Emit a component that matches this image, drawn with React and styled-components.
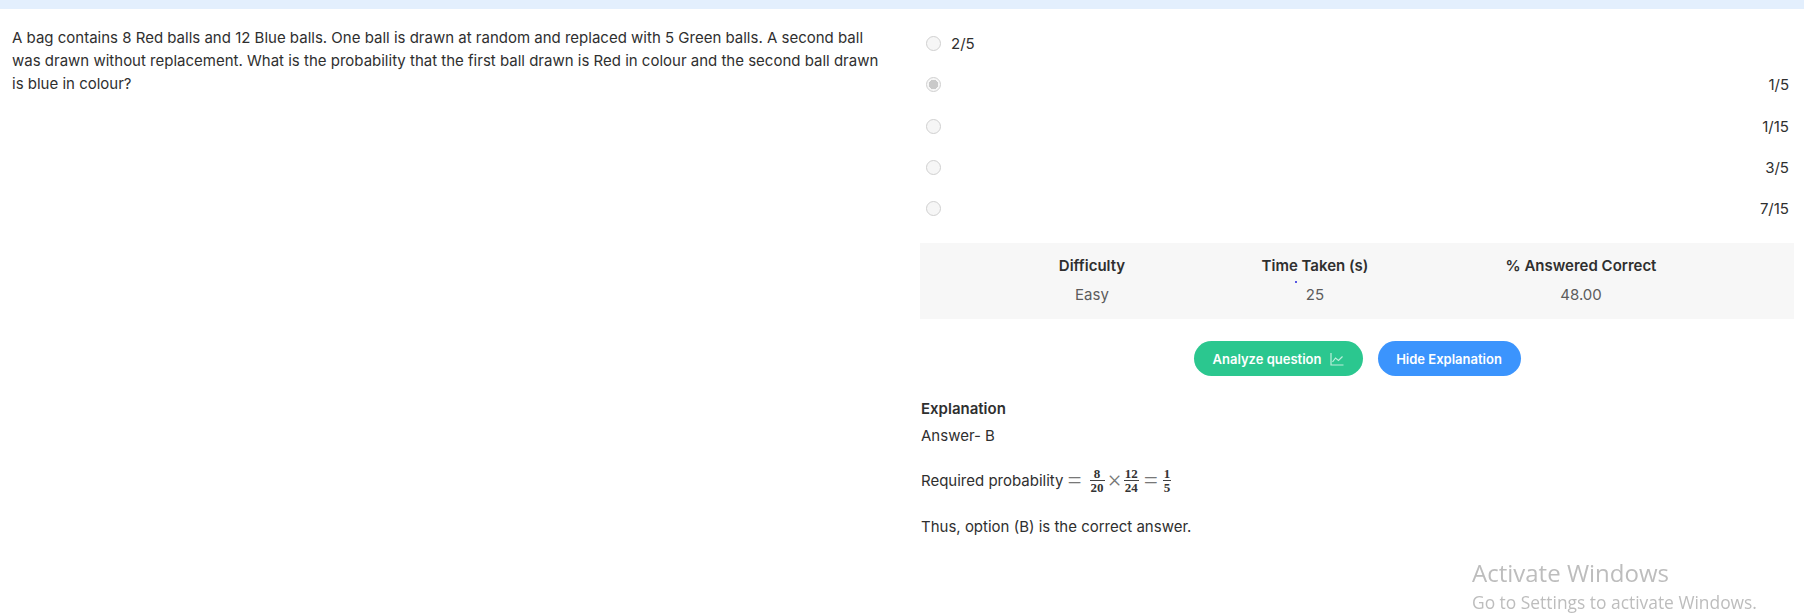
import React from "react";
import styled, { createGlobalStyle } from "styled-components";

const GlobalStyle = createGlobalStyle`
  html, body {
    margin: 0;
    padding: 0;
    background: #fff;
    height: 100%;
    overflow: hidden;
  }
  body {
    font-family: Inter, "Liberation Sans", sans-serif;
    font-size: 15px;
    color: #2f2f2f;
  }
`;

const TopBar = styled.div`
  height: 9px;
  background: #e3effd;
`;

const Main = styled.div`
  display: grid;
  grid-template-columns: 920px 874px;
  padding-top: 14px;
`;

const Question = styled.p`
  margin: 0;
  padding: 3px 30px 0 12px;
  line-height: 23px;
`;

const Side = styled.div`
  display: flex;
  flex-direction: column;
`;

const Options = styled.div`
  display: flex;
  flex-direction: column;
  margin-bottom: 14px;
`;

const OptionRow = styled.label`
  display: flex;
  align-items: center;
  height: 41.3px;
  padding: 0 5px 0 6px;
`;

const Radio = styled.input.attrs({ type: "radio", disabled: true })`
  appearance: none;
  flex: none;
  box-sizing: border-box;
  width: 15px;
  height: 15px;
  margin: 0;
  border: 1px solid #d0d0d0;
  border-radius: 50%;
  background: #f6f6f6;

  &:checked {
    background: radial-gradient(circle, #c9c9c9 0 4.5px, #f6f6f6 5px);
  }
`;

const OptionText = styled.span`
  flex: 1;
  margin-left: ${(p) => (p.$right ? "0" : "10px")};
  text-align: ${(p) => (p.$right ? "right" : "left")};
`;

const Stats = styled.div`
  position: relative;
  display: grid;
  grid-template-columns: 344px 102px 430px;
  justify-content: start;
  align-content: start;
  padding-top: 11px;
  height: 76px;
  box-sizing: border-box;
  background: #f7f7f7;
  text-align: center;
`;

const StatHead = styled.div`
  justify-self: center;
  font-weight: 600;
  line-height: 23px;
  white-space: nowrap;
`;

const StatValue = styled.div`
  margin-top: 7px;
  line-height: 22px;
  color: #5c5c5c;
`;

const BlueSpeck = styled.i`
  position: absolute;
  left: 375px;
  top: 38px;
  width: 2px;
  height: 2px;
  background: #2222dd;
  border-radius: 50%;
`;

const Buttons = styled.div`
  display: flex;
  justify-content: center;
  gap: 15px;
  margin-top: 22px;
`;

const PillButton = styled.button`
  display: inline-flex;
  align-items: center;
  justify-content: center;
  gap: 8px;
  box-sizing: border-box;
  width: ${(p) => p.$width}px;
  height: 35px;
  padding: 0 0 0 ${(p) => p.$inset || 0}px;
  border: 0;
  border-radius: 18px;
  background: ${(p) => p.$bg};
  color: #fff;
  font-family: inherit;
  font-size: 13px;
  font-weight: 600;
`;

const Explanation = styled.div`
  padding: 21px 0 0 1px;
`;

const ExplanationTitle = styled.div`
  font-weight: 600;
  line-height: 23px;
`;

const ExplanationLine = styled.p`
  display: flex;
  align-items: center;
  margin: ${(p) => p.$gap}px 0 0;
  height: 23px;
`;

const MathOp = styled.span`
  margin: ${(p) => p.$margin};
  font-family: "Liberation Serif", serif;
  font-size: 25px;
  line-height: 23px;
  color: #777;
`;

const Frac = styled.span`
  display: inline-flex;
  flex-direction: column;
  align-items: center;
  margin: 0 1px;
  font-family: "Liberation Serif", serif;
  font-size: 13px;
  font-weight: 700;
  line-height: 12px;
  color: #333;
`;

const FracTop = styled.span`
  align-self: stretch;
  text-align: center;
  padding: 0 1px;
  border-bottom: 1px solid #444;
`;

const FracBottom = styled.span`
  padding: 1px 1px 0;
`;

const Watermark = styled.div`
  position: fixed;
  left: 1472px;
  top: 556px;
  font-family: "Open Sans", sans-serif;
  color: #bdbdbd;
  pointer-events: none;
  white-space: nowrap;
`;

const WatermarkTitle = styled.div`
  font-size: 24px;
  line-height: 33px;
`;

const WatermarkText = styled.div`
  font-size: 17.4px;
  line-height: 26px;
`;

const options = [
  { text: "2/5" },
  { text: "1/5", right: true, checked: true },
  { text: "1/15", right: true },
  { text: "3/5", right: true },
  { text: "7/15", right: true },
];

const Fraction = ({ top, bottom }) => (
  <Frac>
    <FracTop>{top}</FracTop>
    <FracBottom>{bottom}</FracBottom>
  </Frac>
);

const ChartIcon = () => (
  <svg width="16" height="16" viewBox="0 0 16 16" fill="none" stroke="#bdeedb" strokeWidth="1.2">
    <path d="M2 2v12h12.5" />
    <path d="M3.5 11l3-4 3 2.5 4-4" />
  </svg>
);

export default function App() {
  return (
    <>
      <GlobalStyle />
      <TopBar />
      <Main>
        <Question>
          A bag contains 8 Red balls and 12 Blue balls. One ball is drawn at
          random and replaced with 5 Green balls. A second ball was drawn
          without replacement. What is the probability that the first ball
          drawn is Red in colour and the second ball drawn is blue in colour?
        </Question>
        <Side>
          <Options>
            {options.map((o) => (
              <OptionRow key={o.text}>
                <Radio name="answer" defaultChecked={o.checked} />
                <OptionText $right={o.right}>{o.text}</OptionText>
              </OptionRow>
            ))}
          </Options>
          <Stats>
            <StatHead>Difficulty</StatHead>
            <StatHead>Time Taken (s)</StatHead>
            <StatHead>% Answered Correct</StatHead>
            <StatValue>Easy</StatValue>
            <StatValue>25</StatValue>
            <StatValue>48.00</StatValue>
            <BlueSpeck />
          </Stats>
          <Buttons>
            <PillButton $width={169} $bg="#2bc78f" $inset={2}>
              Analyze question
              <ChartIcon />
            </PillButton>
            <PillButton $width={143} $bg="#3b94fd">
              Hide Explanation
            </PillButton>
          </Buttons>
          <Explanation>
            <ExplanationTitle>Explanation</ExplanationTitle>
            <ExplanationLine $gap={4}>Answer- B</ExplanationLine>
            <ExplanationLine $gap={22}>
              Required probability
              <MathOp $margin="0 7px 0 4px">=</MathOp>
              <Fraction top="8" bottom="20" />
              <MathOp $margin="0 1px 0 2px">×</MathOp>
              <Fraction top="12" bottom="24" />
              <MathOp $margin="0 4px 0 4px">=</MathOp>
              <Fraction top="1" bottom="5" />
            </ExplanationLine>
            <ExplanationLine $gap={23}>
              Thus, option (B) is the correct answer.
            </ExplanationLine>
          </Explanation>
        </Side>
      </Main>
      <Watermark>
        <WatermarkTitle>Activate Windows</WatermarkTitle>
        <WatermarkText>Go to Settings to activate Windows.</WatermarkText>
      </Watermark>
    </>
  );
}
